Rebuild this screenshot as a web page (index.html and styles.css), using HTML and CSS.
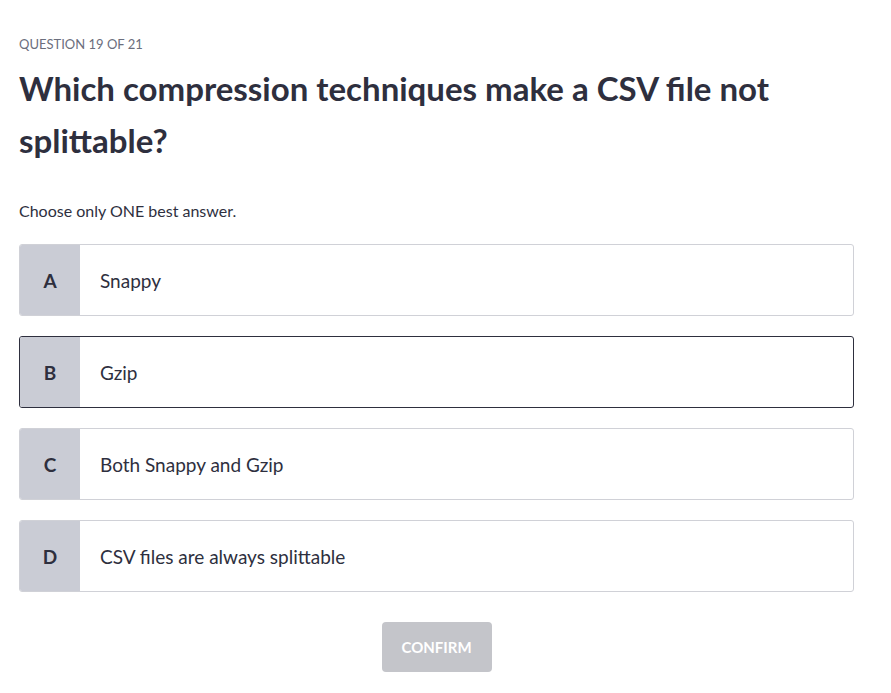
FILE: index.html
```html
<!DOCTYPE html>
<html>
<head>
<meta charset="utf-8">
<link rel="stylesheet" href="styles.css">
</head>
<body>
<main class="quiz">
  <div class="counter">QUESTION 19 OF 21</div>
  <h1 class="question">Which compression techniques make a CSV file not splittable?</h1>
  <p class="hint">Choose only ONE best answer.</p>
  <ul class="options">
    <li class="option"><span class="letter">A</span><span class="label">Snappy</span></li>
    <li class="option selected"><span class="letter">B</span><span class="label">Gzip</span></li>
    <li class="option"><span class="letter">C</span><span class="label">Both Snappy and Gzip</span></li>
    <li class="option"><span class="letter">D</span><span class="label">CSV files are always splittable</span></li>
  </ul>
  <div class="actions"><button class="confirm">CONFIRM</button></div>
</main>
</body>
</html>
```
FILE: styles.css
```css
html, body {
  margin: 0;
  padding: 0;
  background: #ffffff;
}
body {
  font-family: "Lato", "Open Sans", sans-serif;
  color: #2e2f3e;
}
.quiz {
  padding: 36px 37px 0 19px;
}
.counter {
  font-size: 13px;
  line-height: 16px;
  color: #6b6e7d;
}
.question {
  margin: 10px 0 0;
  font-size: 33px;
  line-height: 52px;
  font-weight: 700;
  color: #2e2f3e;
  max-width: 800px;
}
.hint {
  margin: 35px 0 0;
  font-size: 16px;
  line-height: 20px;
  color: #2e2f3e;
}
.options {
  list-style: none;
  margin: 23px 0 0;
  padding: 0;
  display: flex;
  flex-direction: column;
  gap: 20px;
}
.option {
  display: flex;
  height: 72px;
  box-sizing: border-box;
  border: 1px solid #d0d1d7;
  border-radius: 3px;
  overflow: hidden;
}
.option.selected {
  border-color: #2e2f3e;
}
.letter {
  width: 60px;
  flex: none;
  background: #caccd5;
  display: flex;
  align-items: center;
  justify-content: center;
  font-size: 19px;
  font-weight: 700;
  color: #2e2f3e;
}
.label {
  display: flex;
  align-items: center;
  padding-left: 20px;
  font-size: 19px;
  color: #2e2f3e;
}
.actions {
  display: flex;
  justify-content: center;
  margin-top: 30px;
}
.confirm {
  width: 110px;
  height: 50px;
  border: none;
  border-radius: 4px;
  background: #c4c5ca;
  color: #ffffff;
  font-family: inherit;
  font-size: 15px;
  font-weight: 700;
}
```
